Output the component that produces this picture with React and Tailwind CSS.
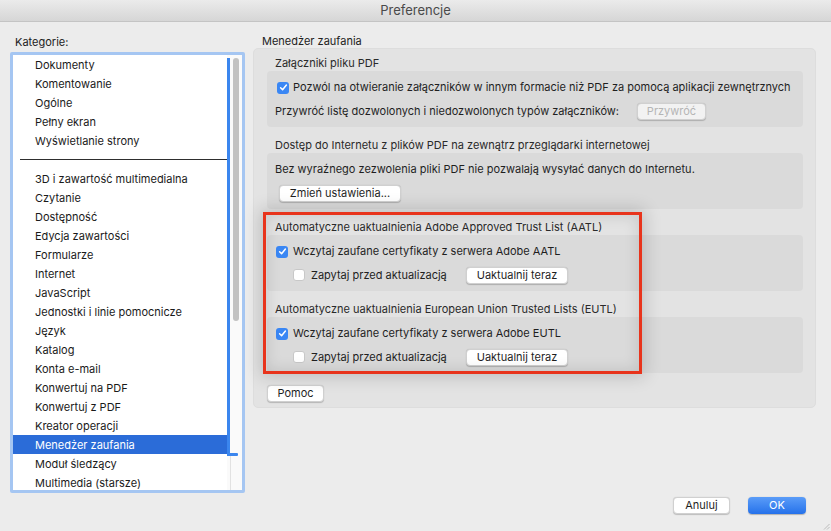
import React from "react";

const FONT = { fontFamily: "Inter, 'Liberation Sans', sans-serif" };

const categoriesTop = ["Dokumenty", "Komentowanie", "Ogólne", "Pełny ekran", "Wyświetlanie strony"];
const categoriesBottom = [
  "3D i zawartość multimedialna",
  "Czytanie",
  "Dostępność",
  "Edycja zawartości",
  "Formularze",
  "Internet",
  "JavaScript",
  "Jednostki i linie pomocnicze",
  "Język",
  "Katalog",
  "Konta e-mail",
  "Konwertuj na PDF",
  "Konwertuj z PDF",
  "Kreator operacji",
  "Menedżer zaufania",
  "Moduł śledzący",
  "Multimedia (starsze)",
];

function Row({ label }) {
  const sel = label === "Menedżer zaufania";
  return (
    <div
      className={
        "h-[19px] shrink-0 flex items-center pl-[22px] pt-[1px] text-[11px] leading-none whitespace-nowrap " +
        (sel ? "bg-[#2b6cd8] text-white" : "text-[#1a1a1a]")
      }
    >
      {label}
    </div>
  );
}

function Checkbox({ checked }) {
  if (checked) {
    return (
      <div className="w-[12px] h-[12px] rounded-[3px] bg-[#3a87f4] flex items-center justify-center shrink-0">
        <svg width="9" height="9" viewBox="0 0 9 9">
          <path d="M1.6 4.7 L3.6 6.7 L7.4 2" fill="none" stroke="white" strokeWidth="1.5" strokeLinecap="round" strokeLinejoin="round" />
        </svg>
      </div>
    );
  }
  return <div className="w-[12px] h-[12px] rounded-[3px] bg-white border border-[#c8c8c8] shrink-0" />;
}

function Btn({ children, w, disabled }) {
  return (
    <div
      className={
        "h-[17px] rounded-[4px] border border-[#d0d0d0] shadow-[0_0.5px_1px_rgba(0,0,0,0.2)] flex items-center justify-center text-[11px] leading-none shrink-0 whitespace-nowrap " +
        (disabled ? "text-[#b5b5b5] bg-[#f2f2f2]" : "text-[#1f1f1f] bg-white")
      }
      style={{ width: w }}
    >
      {children}
    </div>
  );
}

function Section({ title, first, children }) {
  return (
    <div className={first ? "pt-[7px]" : "pt-[11px]"}>
      <div className="h-[15px] leading-[15px] pl-[8px] text-[11px] text-[#2a2a2a] whitespace-nowrap">{title}</div>
      <div className="h-[56px] rounded-[4px] bg-[#dadada] pt-[8px]">{children}</div>
    </div>
  );
}

export default function App() {
  return (
    <div className="w-[831px] h-[531px] bg-[#ececec] relative overflow-hidden" style={FONT}>
      {/* title bar */}
      <div className="h-[22px] bg-gradient-to-b from-[#ebebeb] to-[#d6d6d6] border-b border-[#c4c4c4] flex items-center justify-center text-[13px] text-[#4a4a4a]">
        Preferencje
      </div>

      <div className="flex">
        {/* left column */}
        <div className="ml-[10px] w-[235px] shrink-0">
          <div className="pt-[13px] pl-[5px] h-[30px] text-[11px] leading-[15px] text-[#222]">Kategorie:</div>
          <div className="h-[441px] border-[3px] border-[#a5c6f2] rounded-[2px] bg-white flex overflow-hidden">
            <div className="w-[214px] flex flex-col overflow-hidden">
              {categoriesTop.map((c) => (
                <Row key={c} label={c} />
              ))}
              <div className="h-[19px] shrink-0 flex items-center pl-[7px]">
                <div className="h-px w-full bg-[#2e2e2e]" />
              </div>
              {categoriesBottom.map((c) => (
                <Row key={c} label={c} />
              ))}
            </div>
            {/* scroll track */}
            <div className="w-[15px] relative bg-[#fafafa]">
              <div className="absolute left-0 top-[3px] w-[3px] h-[398px] bg-[#3b86ee]" />
              <div className="absolute left-0 top-[398px] w-[11px] h-[3px] bg-[#3b86ee] rounded-r-[1px]" />
              <div className="absolute left-[3px] top-[401px] bottom-0 w-px bg-[#e2e2e2]" />
              <div className="absolute left-[6px] top-[3px] w-[6px] h-[263px] rounded-full bg-[#c2c2c2]" />
            </div>
          </div>
        </div>

        {/* right column */}
        <div className="ml-[8px] w-[563px] shrink-0">
          <div className="pt-[13px] pl-[9px] h-[26px] text-[11px] leading-[13px] text-[#222]">Menedżer zaufania</div>
          <div className="h-[360px] rounded-[5px] bg-[#e3e3e3] border border-[#dddddd] pl-[13px] pr-[12px]">
            <Section title="Załączniki pliku PDF" first>
              <div className="h-[17px] flex items-center pl-[10px] gap-[4px] text-[11px] text-[#1f1f1f] whitespace-nowrap">
                <Checkbox checked />
                <span>Pozwól na otwieranie załączników w innym formacie niż PDF za pomocą aplikacji zewnętrznych</span>
              </div>
              <div className="h-[18px] mt-[6px] flex items-center pl-[8px] text-[11px] text-[#1f1f1f] whitespace-nowrap">
                <span className="w-[362px]">Przywróć listę dozwolonych i niedozwolonych typów załączników:</span>
                <Btn w={69} disabled>Przywróć</Btn>
              </div>
            </Section>

            <Section title="Dostęp do Internetu z plików PDF na zewnątrz przeglądarki internetowej">
              <div className="h-[17px] flex items-center pl-[8px] text-[11px] text-[#1f1f1f] whitespace-nowrap">
                Bez wyraźnego zezwolenia pliki PDF nie pozwalają wysyłać danych do Internetu.
              </div>
              <div className="h-[18px] mt-[6px] flex items-center pl-[12px]">
                <Btn w={122}>Zmień ustawienia...</Btn>
              </div>
            </Section>

            <Section title="Automatyczne uaktualnienia Adobe Approved Trust List (AATL)">
              <div className="h-[17px] flex items-center pl-[9px] gap-[5px] text-[11px] text-[#1f1f1f] whitespace-nowrap">
                <Checkbox checked />
                <span>Wczytaj zaufane certyfikaty z serwera Adobe AATL</span>
              </div>
              <div className="h-[18px] mt-[6px] flex items-center pl-[26px] text-[11px] text-[#1f1f1f] whitespace-nowrap">
                <Checkbox />
                <span className="ml-[6px] w-[155px]">Zapytaj przed aktualizacją</span>
                <Btn w={102}>Uaktualnij teraz</Btn>
              </div>
            </Section>

            <Section title="Automatyczne uaktualnienia European Union Trusted Lists (EUTL)">
              <div className="h-[17px] flex items-center pl-[9px] gap-[5px] text-[11px] text-[#1f1f1f] whitespace-nowrap">
                <Checkbox checked />
                <span>Wczytaj zaufane certyfikaty z serwera Adobe EUTL</span>
              </div>
              <div className="h-[18px] mt-[6px] flex items-center pl-[26px] text-[11px] text-[#1f1f1f] whitespace-nowrap">
                <Checkbox />
                <span className="ml-[6px] w-[155px]">Zapytaj przed aktualizacją</span>
                <Btn w={102}>Uaktualnij teraz</Btn>
              </div>
            </Section>

            <div className="mt-[12px]">
              <Btn w={57}>Pomoc</Btn>
            </div>
          </div>
        </div>
      </div>

      {/* bottom buttons */}
      <div className="flex justify-end gap-[18px] pr-[25px] mt-[4px]">
        <Btn w={57}>Anuluj</Btn>
        <div className="w-[58px] h-[17px] rounded-[4px] bg-gradient-to-b from-[#5a9cf8] to-[#2471ea] shadow-[0_0.5px_1px_rgba(0,0,0,0.25)] flex items-center justify-center text-[11px] text-white leading-none">
          OK
        </div>
      </div>

      {/* resize grip */}
      <svg className="absolute right-[1px] bottom-[1px]" width="8" height="8" viewBox="0 0 8 8">
        <path d="M7.5 2 L2 7.5 M7.5 5 L5 7.5" stroke="#b0b0b0" strokeWidth="0.8" />
      </svg>

      {/* red annotation */}
      <div className="absolute left-[263px] top-[212px] w-[379px] h-[162px] border-[3px] border-[#e8341c] shadow-[0_0_16px_3px_rgba(0,0,0,0.16),inset_0_0_14px_2px_rgba(0,0,0,0.10)]" />
    </div>
  );
}
